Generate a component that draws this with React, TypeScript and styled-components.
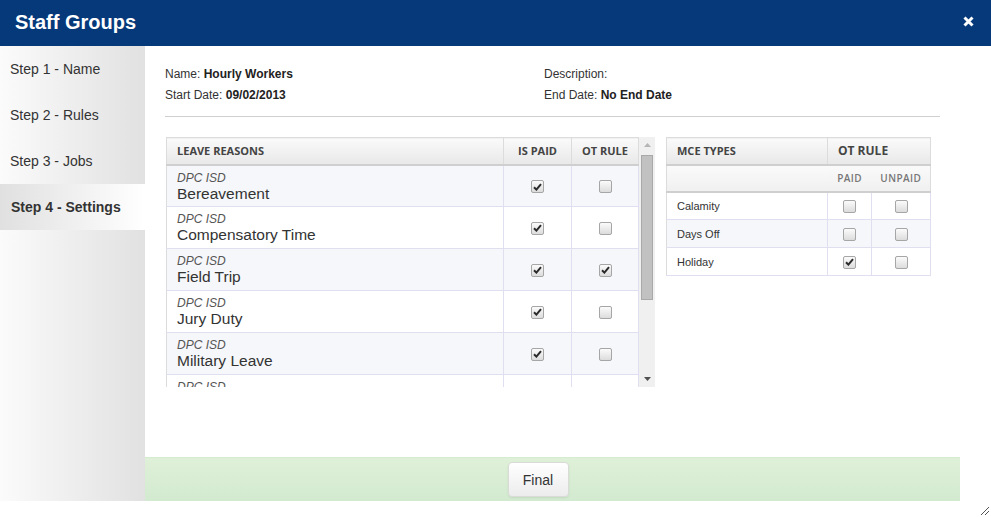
import React from "react";
import styled, { createGlobalStyle } from "styled-components";

const Global = createGlobalStyle`
  html, body { margin: 0; padding: 0; background: #fff; }
  body { font-family: "Liberation Sans", Arial, sans-serif; color: #333; }
  * { box-sizing: border-box; }
`;

const Modal = styled.div`
  position: relative;
  width: 991px;
  height: 517px;
  background: #fff;
  display: flex;
  flex-direction: column;
  overflow: hidden;
`;

const Header = styled.div`
  height: 46px;
  flex: 0 0 46px;
  background: #05397a;
  display: flex;
  align-items: center;
  justify-content: space-between;
  padding: 0 15px 0 15px;
`;

const Title = styled.h1`
  margin: 0;
  font-size: 20px;
  font-weight: bold;
  color: #fff;
  font-family: "Liberation Sans", Arial, sans-serif;
  line-height: 1;
  padding-bottom: 2px;
`;

const Close = styled.span`
  display: flex;
  width: 12px;
  height: 12px;
  margin-right: 1px;
  margin-bottom: 3px;
`;

const Body = styled.div`
  display: flex;
  height: 455px;
  flex: 0 0 455px;
`;

const Sidebar = styled.nav`
  width: 145px;
  flex: 0 0 145px;
  background: linear-gradient(to right, #fbfbfb, #e1e1e1);
  display: flex;
  flex-direction: column;
`;

const NavItem = styled.div<{ $active?: boolean }>`
  height: 46px;
  line-height: 46px;
  padding-left: ${(p) => (p.$active ? 11 : 10)}px;
  font-size: 14px;
  color: #333;
  font-weight: ${(p) => (p.$active ? "bold" : "normal")};
  background: ${(p) =>
    p.$active ? "linear-gradient(to right, #e0e0e0, #ffffff)" : "transparent"};
`;

const Main = styled.div`
  flex: 1;
  margin-right: 31px;
  display: flex;
  flex-direction: column;
`;

const Content = styled.div`
  flex: 1;
  padding: 18px 20px 0 20px;
`;

const InfoGrid = styled.div`
  display: grid;
  grid-template-columns: 379px 1fr;
  row-gap: 0;
  font-size: 12px;
  line-height: 21px;
  color: #333;
  padding-bottom: 10px;
  border-bottom: 1px solid #cfcfcf;
`;

const Value = styled.b`
  color: #222;
`;

const Tables = styled.div`
  display: flex;
  align-items: flex-start;
  gap: 11px;
  margin-top: 20px;
  padding-left: 1px;
`;

const LeavePanel = styled.div`
  display: flex;
  width: 489px;
  height: 250px;
`;

const Viewport = styled.div`
  flex: 1;
  overflow: hidden;
`;

const Table = styled.table`
  border-collapse: collapse;
  width: 100%;
  table-layout: fixed;
`;

const Th = styled.th<{ $center?: boolean; $size?: number }>`
  height: 27px;
  padding: 0 10px;
  font-family: "Open Sans", "Liberation Sans", Arial, sans-serif;
  font-size: ${(p) => p.$size ?? 11}px;
  font-weight: 700;
  color: #444;
  text-align: ${(p) => (p.$center ? "center" : "left")};
  background: linear-gradient(#fafafa, #e8e8e8);
  border: 1px solid #dcdcdc;
  border-bottom: 2px solid #cfcfcf;
  white-space: nowrap;
`;

const Tr = styled.tr<{ $alt?: boolean }>`
  background: ${(p) => (p.$alt ? "#f6f7fa" : "#ffffff")};
`;

const ReasonCell = styled.td`
  height: 42px;
  padding: 5px 10px 0 10px;
  vertical-align: top;
  border: 1px solid #dfdfef;
  border-left-color: #dcdcdc;
`;

const Org = styled.div`
  font-size: 12px;
  font-style: italic;
  color: #555;
  line-height: 14px;
`;

const Reason = styled.div`
  font-size: 15.5px;
  color: #333;
  line-height: 18px;
`;

const CheckCell = styled.td<{ $h?: number }>`
  height: ${(p) => p.$h ?? 42}px;
  text-align: center;
  vertical-align: middle;
  border: 1px solid #dfdfef;
  padding: 0;
`;

const Box = styled.span`
  display: inline-flex;
  align-items: center;
  justify-content: center;
  width: 13px;
  height: 13px;
  border: 1px solid #a6a6a6;
  border-radius: 2px;
  background: linear-gradient(#fbfbfb, #dcdcdc);
  vertical-align: middle;
`;

const Scrollbar = styled.div`
  width: 16px;
  flex: 0 0 16px;
  background: #f0f0f0;
  display: flex;
  flex-direction: column;
`;

const Arrow = styled.div`
  height: 16px;
  flex: 0 0 16px;
  display: flex;
  align-items: center;
  justify-content: center;
`;

const Track = styled.div`
  flex: 1;
  padding: 2px 2px 0 2px;
`;

const Thumb = styled.div`
  height: 145px;
  background: #c1c1c1;
  border: 1px solid #a9a9a9;
`;

const MceTable = styled.table`
  border-collapse: collapse;
  width: 264px;
  table-layout: fixed;
`;

const SubTh = styled.th`
  height: 27px;
  padding: 0;
  font-family: "Open Sans", "Liberation Sans", Arial, sans-serif;
  font-size: 10px;
  font-weight: 600;
  letter-spacing: 0.4px;
  color: #777;
  text-align: center;
  background: linear-gradient(#fafafa, #f0f0f0);
  border: 1px solid #dcdcdc;
  border-bottom: 2px solid #cfcfcf;
  border-right: none;
  border-left: none;
  &:first-child { border-left: 1px solid #dcdcdc; }
  &:last-child { border-right: 1px solid #dcdcdc; }
`;

const MceName = styled.td`
  height: 28px;
  padding: 0 10px;
  font-size: 11px;
  color: #333;
  border: 1px solid #dfdfef;
  border-left-color: #dcdcdc;
`;

const Footer = styled.div`
  height: 44px;
  flex: 0 0 44px;
  background: linear-gradient(#dff0d8, #d2ead0);
  border-top: 1px solid #d6ecd0;
  display: flex;
  align-items: center;
  justify-content: center;
  padding-right: 29px;
`;

const Button = styled.button`
  width: 61px;
  height: 35px;
  font-family: "Liberation Sans", Arial, sans-serif;
  font-size: 14px;
  color: #333;
  background: linear-gradient(#ffffff, #ececec);
  border: 1px solid #d9dcd6;
  border-radius: 4px;
  box-shadow: 0 1px 2px rgba(0, 0, 0, 0.08);
`;

const Grip = styled.svg`
  position: absolute;
  right: 1px;
  bottom: 1px;
`;

const Check = ({ checked }: { checked?: boolean }) => (
  <Box>
    {checked && (
      <svg width="9" height="8" viewBox="0 0 9 8">
        <path d="M1 4.2 L3.4 6.6 L8 1.2" stroke="#2a2a2a" strokeWidth="2" fill="none" />
      </svg>
    )}
  </Box>
);

const reasons: { name: string; paid: boolean; ot: boolean }[] = [
  { name: "Bereavement", paid: true, ot: false },
  { name: "Compensatory Time", paid: true, ot: false },
  { name: "Field Trip", paid: true, ot: true },
  { name: "Jury Duty", paid: true, ot: false },
  { name: "Military Leave", paid: true, ot: false },
  { name: "Personal Leave", paid: true, ot: false },
  { name: "Sick Leave", paid: true, ot: false },
  { name: "Vacation", paid: true, ot: false },
];

const mce: { name: string; paid: boolean; unpaid: boolean }[] = [
  { name: "Calamity", paid: false, unpaid: false },
  { name: "Days Off", paid: false, unpaid: false },
  { name: "Holiday", paid: true, unpaid: false },
];

export default function App() {
  return (
    <>
      <Global />
      <Modal>
        <Header>
          <Title>Staff Groups</Title>
          <Close>
            <svg width="11" height="11" viewBox="0 0 11 11">
              <path d="M1.5 1.5 L9.5 9.5 M9.5 1.5 L1.5 9.5" stroke="#fff" strokeWidth="3" />
            </svg>
          </Close>
        </Header>
        <Body>
          <Sidebar>
            <NavItem>Step 1 - Name</NavItem>
            <NavItem>Step 2 - Rules</NavItem>
            <NavItem>Step 3 - Jobs</NavItem>
            <NavItem $active>Step 4 - Settings</NavItem>
          </Sidebar>
          <Main>
            <Content>
              <InfoGrid>
                <div>
                  Name: <Value>Hourly Workers</Value>
                </div>
                <div>Description:</div>
                <div>
                  Start Date: <Value>09/02/2013</Value>
                </div>
                <div>
                  End Date: <Value>No End Date</Value>
                </div>
              </InfoGrid>
              <Tables>
                <LeavePanel>
                  <Viewport>
                    <Table>
                      <colgroup>
                        <col />
                        <col width={68} />
                        <col width={67} />
                      </colgroup>
                      <thead>
                        <tr>
                          <Th>LEAVE REASONS</Th>
                          <Th $center>IS PAID</Th>
                          <Th $center>OT RULE</Th>
                        </tr>
                      </thead>
                      <tbody>
                        {reasons.map((r, i) => (
                          <Tr key={r.name} $alt={i % 2 === 0}>
                            <ReasonCell>
                              <Org>DPC ISD</Org>
                              <Reason>{r.name}</Reason>
                            </ReasonCell>
                            <CheckCell>
                              <Check checked={r.paid} />
                            </CheckCell>
                            <CheckCell>
                              <Check checked={r.ot} />
                            </CheckCell>
                          </Tr>
                        ))}
                      </tbody>
                    </Table>
                  </Viewport>
                  <Scrollbar>
                    <Arrow>
                      <svg width="7" height="4" viewBox="0 0 7 4">
                        <path d="M0 4 L3.5 0 L7 4 Z" fill="#b5b5b5" />
                      </svg>
                    </Arrow>
                    <Track>
                      <Thumb />
                    </Track>
                    <Arrow>
                      <svg width="7" height="4" viewBox="0 0 7 4">
                        <path d="M0 0 L3.5 4 L7 0 Z" fill="#505050" />
                      </svg>
                    </Arrow>
                  </Scrollbar>
                </LeavePanel>
                <MceTable>
                  <colgroup>
                    <col width={161} />
                    <col width={44} />
                    <col width={59} />
                  </colgroup>
                  <thead>
                    <tr>
                      <Th>MCE TYPES</Th>
                      <Th colSpan={2} $size={12}>OT RULE</Th>
                    </tr>
                    <tr>
                      <SubTh />
                      <SubTh>PAID</SubTh>
                      <SubTh>UNPAID</SubTh>
                    </tr>
                  </thead>
                  <tbody>
                    {mce.map((m, i) => (
                      <Tr key={m.name} $alt={i % 2 === 1}>
                        <MceName>{m.name}</MceName>
                        <CheckCell $h={28}>
                          <Check checked={m.paid} />
                        </CheckCell>
                        <CheckCell $h={28}>
                          <Check checked={m.unpaid} />
                        </CheckCell>
                      </Tr>
                    ))}
                  </tbody>
                </MceTable>
              </Tables>
            </Content>
            <Footer>
              <Button>Final</Button>
            </Footer>
          </Main>
        </Body>
        <Grip width="12" height="12" viewBox="0 0 12 12">
          <path d="M11 3 L3 11 M11 7 L7 11" stroke="#555" strokeWidth="1" />
        </Grip>
      </Modal>
    </>
  );
}
